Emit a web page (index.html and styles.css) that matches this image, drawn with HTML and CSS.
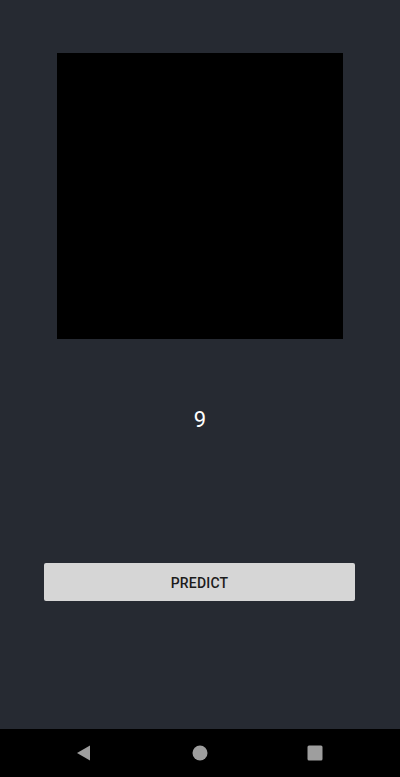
FILE: index.html
```html
<!DOCTYPE html>
<html>
<head>
<meta charset="utf-8">
<link rel="stylesheet" href="styles.css">
</head>
<body>
<div class="screen">
  <main class="app">
    <div class="canvas"></div>
    <div class="result">9</div>
    <button class="predict">PREDICT</button>
  </main>
  <nav class="navbar">
    <svg class="nav-icon" width="16" height="16" viewBox="0 0 16 16"><path d="M14 0.5 L14 15.5 L1 8 Z" fill="#9e9e9e"/></svg>
    <svg class="nav-icon" width="16" height="16" viewBox="0 0 16 16"><circle cx="8" cy="8" r="7.5" fill="#9e9e9e"/></svg>
    <svg class="nav-icon" width="16" height="16" viewBox="0 0 16 16"><rect x="0.5" y="0.5" width="15" height="15" rx="1.5" fill="#9e9e9e"/></svg>
  </nav>
</div>
</body>
</html>
```
FILE: styles.css
```css
html, body {
  margin: 0;
  padding: 0;
  background: #000;
}
.screen {
  width: 400px;
  height: 777px;
  display: flex;
  flex-direction: column;
}
.app {
  height: 729px;
  background: #262a32;
  display: flex;
  flex-direction: column;
  align-items: flex-start;
}
.canvas {
  width: 286px;
  height: 286px;
  margin: 53px 0 0 57px;
  background: #000;
}
.result {
  align-self: center;
  margin-top: 67px;
  height: 28px;
  line-height: 28px;
  font-family: Roboto, "Noto Sans", sans-serif;
  font-size: 22px;
  color: #ffffff;
}
.predict {
  margin: 129px 0 0 44px;
  width: 311px;
  height: 38px;
  border: none;
  border-radius: 2px;
  background: #d6d6d6;
  font-family: Roboto, sans-serif;
  font-weight: 500;
  font-size: 14px;
  color: #1c1c1c;
  padding: 1px 0 0 0;
  letter-spacing: 0.2px;
}
.navbar {
  height: 48px;
  background: #000;
  display: flex;
  align-items: center;
  justify-content: space-between;
  padding: 0 77px 0 76px;
}
.nav-icon {
  display: block;
}
```
